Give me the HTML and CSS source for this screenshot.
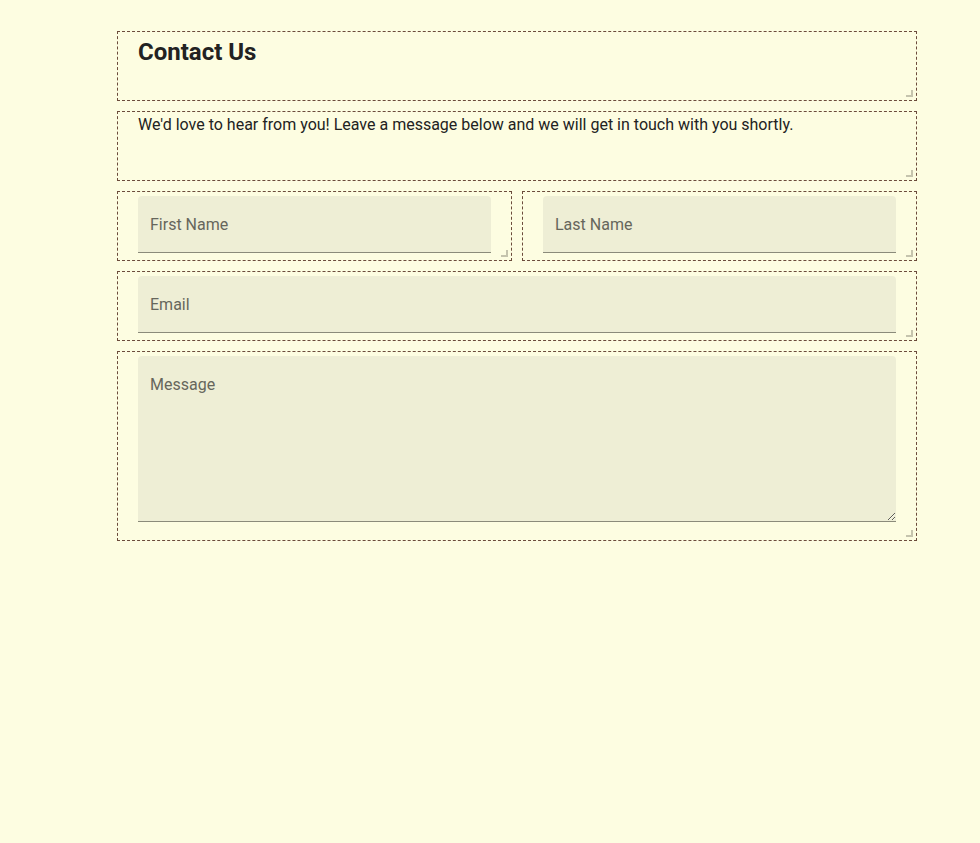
FILE: index.html
```html
<!DOCTYPE html>
<html lang="en">
<head>
<meta charset="utf-8">
<title>Contact Us</title>
<link rel="stylesheet" href="styles.css">
</head>
<body>
<main class="form">
  <div class="box"><h1 class="title">Contact Us</h1></div>
  <div class="box"><p class="lead">We'd love to hear from you! Leave a message below and we will get in touch with you shortly.</p></div>
  <div class="row">
    <div class="box"><input class="field" type="text" placeholder="First Name"></div>
    <div class="box"><input class="field" type="text" placeholder="Last Name"></div>
  </div>
  <div class="box"><input class="field" type="email" placeholder="Email"></div>
  <div class="box box-tall"><textarea class="field area" placeholder="Message"></textarea></div>
</main>
</body>
</html>
```
FILE: styles.css
```css
html, body {
  margin: 0;
  padding: 0;
  background: #fdfde1;
  font-family: Roboto, "Liberation Sans", sans-serif;
  color: #222;
}
.form {
  width: 800px;
  margin: 31px 0 0 117px;
  display: flex;
  flex-direction: column;
  gap: 10px;
}
.row {
  display: grid;
  grid-template-columns: 1fr 1fr;
  gap: 10px;
}
.box {
  position: relative;
  box-sizing: border-box;
  height: 70px;
  padding: 4px 20px 7px;
  border: 1px dashed #6b4b3b;
}
.box::after {
  content: "";
  position: absolute;
  right: 3px;
  bottom: 3px;
  width: 5px;
  height: 5px;
  border-right: 2px solid #c5c4ad;
  border-bottom: 2px solid #c5c4ad;
}
.box-tall {
  height: 190px;
}
.title {
  margin: 0;
  font-size: 24px;
  font-weight: 700;
  line-height: 32px;
  color: #222;
}
.lead {
  margin: 0;
  font-size: 16px;
  line-height: 18px;
  color: #222;
}
.field {
  display: block;
  box-sizing: border-box;
  width: 100%;
  height: 57px;
  margin: 0;
  padding: 0 12px;
  border: none;
  border-bottom: 1px solid #8b8b7a;
  border-radius: 4px 4px 0 0;
  background: #eeeed5;
  font-family: Roboto, "Liberation Sans", sans-serif;
  font-size: 16px;
  color: #222;
  outline: none;
}
.field::placeholder {
  color: #66665c;
}
.area {
  height: 166px;
  padding: 19px 12px 0;
  resize: vertical;
  line-height: 20px;
}
```
